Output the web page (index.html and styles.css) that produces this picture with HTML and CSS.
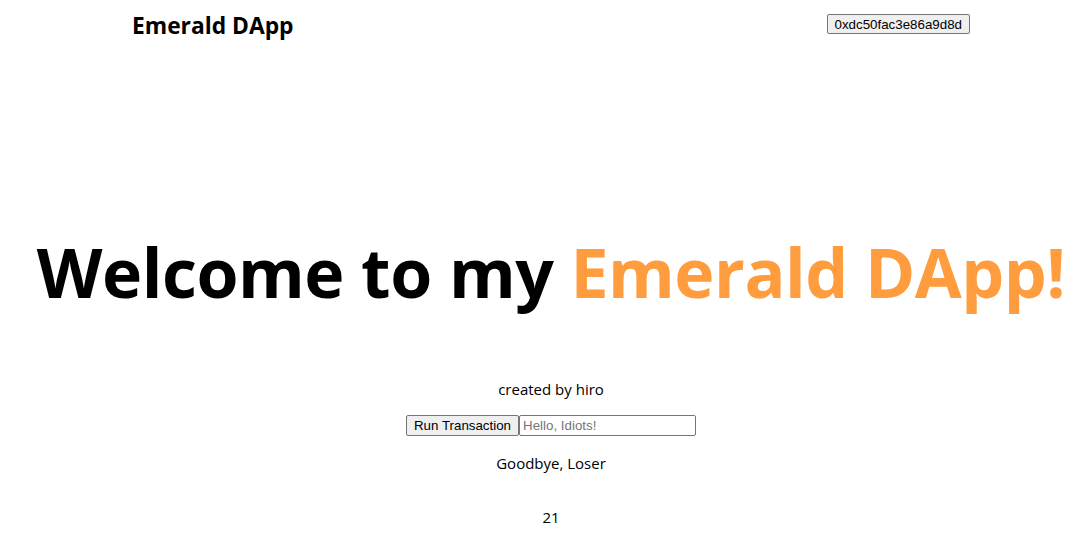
FILE: index.html
```html
<!DOCTYPE html>
<html>
<head>
<meta charset="utf-8">
<link rel="stylesheet" href="styles.css">
</head>
<body>
<nav class="nav">
  <h1 class="brand">Emerald DApp</h1>
  <button class="btn addr">0xdc50fac3e86a9d8d</button>
</nav>
<main class="main">
  <h1 class="title">Welcome to my <span class="accent">Emerald DApp!</span></h1>
  <p class="line created">created by hiro</p>
  <div class="tx">
    <button class="btn">Run Transaction</button><input class="field" type="text" placeholder="Hello, Idiots!">
  </div>
  <p class="line greeting">Goodbye, Loser</p>
  <p class="line number">21</p>
</main>
</body>
</html>
```
FILE: styles.css
```css
html, body {
  margin: 0;
  padding: 0;
  background: #ffffff;
  color: #000000;
  font-family: "Open Sans", "Noto Sans", sans-serif;
}

.nav {
  display: flex;
  justify-content: space-between;
  align-items: center;
  height: 50px;
  padding: 0 114px 0 132px;
}

.brand {
  margin: 0;
  font-size: 22.8px;
  font-weight: 700;
  line-height: 1;
  position: relative;
  top: 1px;
}

.btn {
  font-family: "Liberation Sans", Arial, sans-serif;
  font-size: 13.333px;
  color: #000;
  background: #efefef;
  border: 1px solid #767676;
  border-radius: 2px;
  padding: 1px 7px;
  height: 21px;
  line-height: 17px;
  margin: 0;
}

.addr {
  height: 20px;
  position: relative;
  top: -1px;
}

.main {
  text-align: center;
  padding-top: 171px;
  padding-left: 18px;
}

.title {
  margin: 0;
  font-size: 68px;
  font-weight: 700;
  line-height: 1.5;
  white-space: nowrap;
  letter-spacing: -0.5px;
}

.accent {
  color: #ff9c3e;
}

.line {
  margin: 0;
  font-size: 15px;
  line-height: 20px;
}

.created {
  margin-top: 56px;
}

.tx {
  margin-top: 16px;
  display: flex;
  justify-content: center;
  height: 21px;
}

.field {
  font-family: "Liberation Sans", Arial, sans-serif;
  font-size: 13.333px;
  width: 177px;
  height: 21px;
  box-sizing: border-box;
  border: 1px solid #767676;
  border-radius: 2px;
  padding: 1px 3px;
  margin: 0;
}

.field::placeholder {
  color: #757575;
}

.greeting {
  margin-top: 17px;
}

.number {
  margin-top: 34px;
}
```
